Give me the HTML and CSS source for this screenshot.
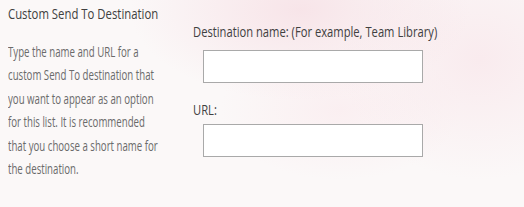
FILE: index.html
```html
<!DOCTYPE html>
<html lang="en">
<head>
    <meta charset="UTF-8">
    <meta name="viewport" content="width=device-width, initial-scale=1.0">
    <title>Custom Send To Destination</title>
    <link rel="stylesheet" href="styles.css">
</head>
<body>
    <div class="page">
        <div class="section-info">
            <h3 class="section-title narrow">Custom Send To Destination</h3>
            <p class="section-desc">Type the name and URL for a<br>custom Send To destination that<br>you want to appear as an option<br>for this list. It is recommended<br>that you choose a short name for<br>the destination.</p>
        </div>
        <div class="section-fields">
            <div class="field">
                <label for="dest-name" class="narrow">Destination name: (For example, Team Library)</label>
                <input type="text" id="dest-name" name="dest-name">
            </div>
            <div class="field">
                <label for="dest-url" class="narrow">URL:</label>
                <input type="text" id="dest-url" name="dest-url">
            </div>
        </div>
    </div>
</body>
</html>
```

FILE: styles.css
```css
body {
    margin: 0;
    padding: 0;
    font-family: "Open Sans", Arial, sans-serif;
    background-color: #fbf8f8;
    background-image:
        radial-gradient(ellipse 170px 90px at 300px 10px, rgba(246, 220, 226, 0.7), rgba(246, 220, 226, 0)),
        radial-gradient(ellipse 140px 120px at 480px 60px, rgba(248, 226, 231, 0.6), rgba(248, 226, 231, 0)),
        radial-gradient(ellipse 120px 70px at 340px 110px, rgba(250, 230, 234, 0.5), rgba(250, 230, 234, 0));
    height: 207px;
    overflow: hidden;
}
.page {
    display: flex;
    padding: 4px 0 0 8px;
}
/* the text in the screenshot is squeezed sideways */
.narrow {
    transform: scaleX(0.8);
    transform-origin: left top;
}
.section-info {
    width: 185px;
    flex-shrink: 0;
}
.section-title {
    margin: 0;
    font-size: 14.2px;
    font-weight: normal;
    line-height: 20px;
    color: #404040;
    white-space: nowrap;
}
.section-desc {
    margin: 16px 0 0;
    font-size: 13.8px;
    line-height: 23.4px;
    color: #6a6a6a;
    white-space: nowrap;
    transform: scaleX(0.7);
    transform-origin: left top;
}
.section-fields {
    padding-top: 19px;
}
.field {
    margin-bottom: 18px;
}
.field label {
    display: block;
    font-size: 14px;
    line-height: 18px;
    color: #404040;
    white-space: nowrap;
}
.field input {
    display: block;
    box-sizing: border-box;
    width: 220px;
    height: 33px;
    margin: 9px 0 0 10px;
    border: 1px solid #a9a9a9;
    background-color: white;
}
.field + .field input {
    margin-top: 5px;
}
```
